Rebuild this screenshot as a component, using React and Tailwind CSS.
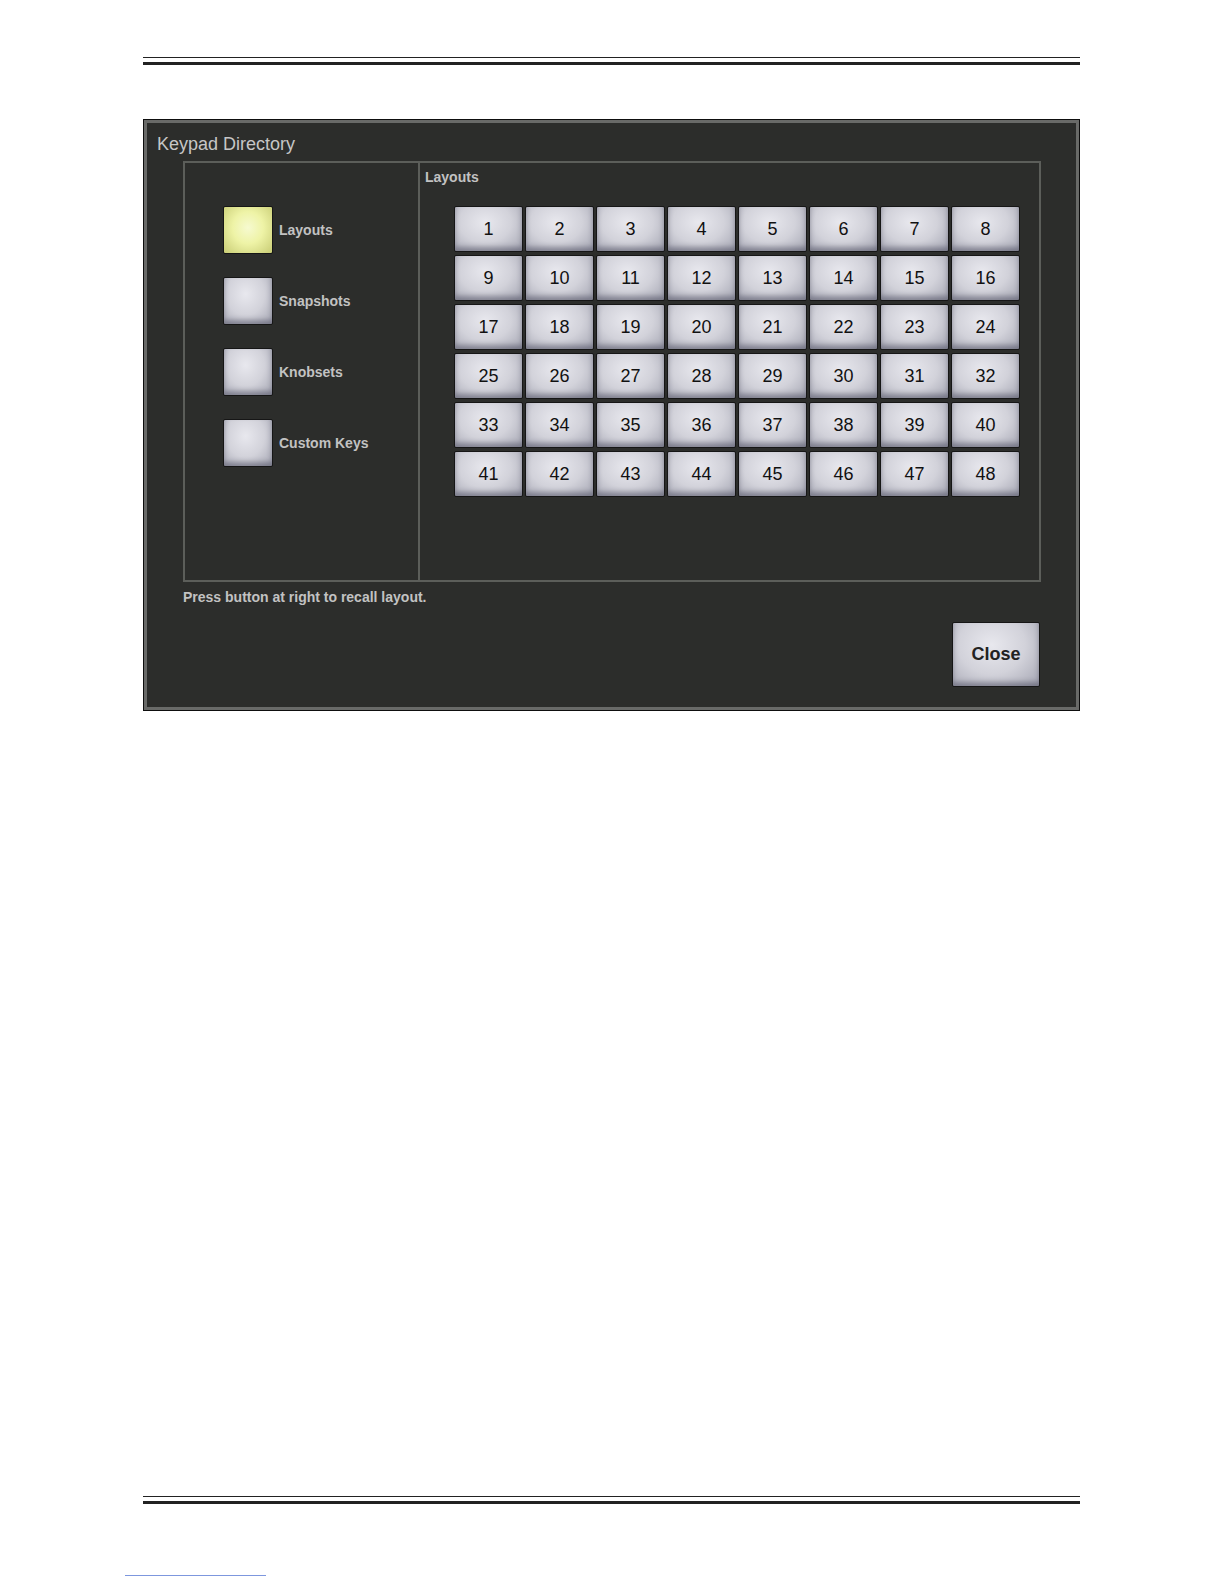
import React from "react";

const categories = ["Layouts", "Snapshots", "Knobsets", "Custom Keys"];

const keyClass =
  "flex items-center justify-center border border-[#161616] rounded-[2px] bg-[radial-gradient(ellipse_at_45%_35%,#e8e8ee_0%,#d2d2da_50%,#a4a5b2_100%)] shadow-[inset_0_-4px_5px_rgba(50,50,70,0.4)] text-[#111] font-['Liberation_Sans',Arial,sans-serif]";

function Rule() {
  return (
    <div>
      <div className="h-px bg-[#222]" />
      <div className="h-[3px] bg-[#222] mt-[4px]" />
    </div>
  );
}

export default function App() {
  const keys = Array.from({ length: 48 }, (_, i) => i + 1);

  return (
    <div className="w-[1224px] h-[1584px] bg-white font-['Liberation_Sans',Arial,sans-serif]">
      <div className="ml-[143px] w-[937px] pt-[57px]">
        <Rule />

        {/* Keypad Directory dialog */}
        <div className="mt-[54px] bg-[#0e0e0e] p-px">
          <div className="h-[590px] border-[3px] border-[#696a68] bg-[#2c2d2b] flex flex-col">
            <div className="pl-[10px] pt-[10px] text-[18px] leading-[22px] text-[#c6c6c6]">
              Keypad Directory
            </div>

            <div className="ml-[36px] mt-[6px] w-[858px] h-[421px] border-2 border-[#5c5e5a] flex">
              {/* category column */}
              <div className="w-[235px] border-r-2 border-[#5c5e5a] pl-[38px] pt-[43px] flex flex-col gap-[23px]">
                {categories.map((name, i) => (
                  <div key={name} className="flex items-center gap-[6px]">
                    <div
                      className={
                        i === 0
                          ? "w-[50px] h-[48px] border border-[#161616] rounded-[2px] bg-[radial-gradient(ellipse_at_50%_45%,#f6fad0_0%,#eef3a6_45%,#c8cc74_100%)]"
                          : "w-[50px] h-[48px] border border-[#161616] rounded-[2px] bg-[radial-gradient(ellipse_at_45%_35%,#e8e8ee_0%,#d2d2da_50%,#a4a5b2_100%)] shadow-[inset_0_-4px_5px_rgba(50,50,70,0.4)]"
                      }
                    />
                    <span className="text-[14px] font-bold text-[#c2c2c2]">
                      {name}
                    </span>
                  </div>
                ))}
              </div>

              {/* layouts grid */}
              <div className="flex-1 pl-[5px] pt-[6px]">
                <div className="text-[14px] leading-[17px] font-bold text-[#c2c2c2]">
                  Layouts
                </div>
                <div className="ml-[29px] mt-[20px] grid grid-cols-[repeat(8,69px)] auto-rows-[46px] gap-x-[2px] gap-y-[3px]">
                  {keys.map((n) => (
                    <div key={n} className={keyClass + " text-[18px]"}>
                      {n}
                    </div>
                  ))}
                </div>
              </div>
            </div>

            <div className="ml-[36px] mt-[7px] text-[14px] leading-[17px] font-bold text-[#c2c2c2]">
              Press button at right to recall layout.
            </div>

            <div className="flex justify-end pr-[36px] mt-[16px]">
              <div className={keyClass + " w-[88px] h-[65px] text-[18px] font-bold text-[#222]"}>
                Close
              </div>
            </div>
          </div>
        </div>

        <div className="mt-[785px]">
          <Rule />
        </div>
      </div>

      <div className="ml-[125px] mt-[71px] w-[141px] h-px bg-[#7d97de]" />
    </div>
  );
}
